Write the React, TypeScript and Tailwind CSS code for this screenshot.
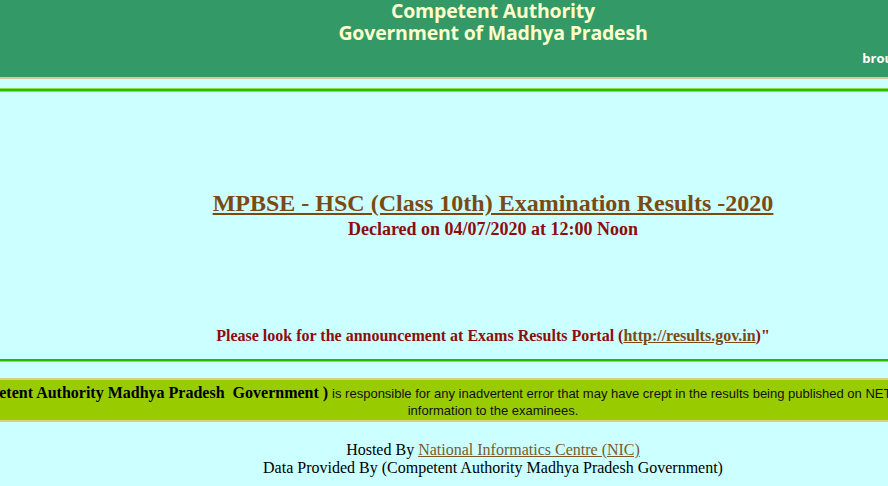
export default function App() {
  return (
    <div className="w-[888px] h-[486px] overflow-hidden bg-[#ccffff]">
      <div className="w-[986px]">
        <div className="h-[79px] bg-[#339966] border-b-2 border-[#d8c8a0] flex flex-col items-center" style={{ fontFamily: '"Open Sans", "DejaVu Sans", sans-serif' }}>
          <div className="text-[19.5px] font-bold leading-[22px] text-[#ffffcc] tracking-[-0.2px]">Competent Authority</div>
          <div className="text-[19.5px] font-bold leading-[22px] text-[#ffffcc] tracking-[-0.2px]">Government of Madhya Pradesh</div>
          <div className="self-stretch flex justify-end mt-[5px] pr-[8px]">
            <span className="text-[13px] font-bold text-white leading-[18px]">brought to you by</span>
          </div>
        </div>
        <div className="mt-[9px] h-[4px] bg-[#2fb800] border-y border-[#88e050]"></div>
        <div className="flex flex-col items-center" style={{ fontFamily: '"Liberation Serif", "Times New Roman", serif' }}>
          <a className="mt-[97px] text-[24px] font-bold leading-[28px] text-[#7b4a12] underline">MPBSE - HSC (Class 10th) Examination Results -2020</a>
          <div className="mt-[2px] text-[18px] font-bold leading-[20px] text-[#8b0d0d]">Declared on 04/07/2020 at 12:00 Noon</div>
          <div className="mt-[87px] text-[16px] font-bold leading-[20px] text-[#8b0d0d]">
            Please look for the announcement at Exams Results Portal (<a className="text-[#7b4a12] underline">http://results.gov.in</a>)"
          </div>
        </div>
        <div className="mt-[13px] h-[3px] bg-[#22bb00] border-b border-[#88e060]"></div>
        <div className="mt-[16px] bg-[#99cc00] border-y-2 border-[#d8d080] pt-[4px] pb-[1px] flex flex-col items-center">
          <div className="flex justify-center whitespace-nowrap leading-[18px] items-baseline">
            <span className="text-[16px] font-bold text-black" style={{ fontFamily: '"Liberation Serif", "Times New Roman", serif' }}>( Competent Authority Madhya Pradesh&nbsp; Government )</span>
            <span className="text-[13px] text-[#111] ml-[4px]" style={{ fontFamily: '"Liberation Sans", Arial, sans-serif' }}>is responsible for any inadvertent error that may have crept in the results being published on NET. These are for immediate</span>
          </div>
          <div className="text-[13px] leading-[16px] text-[#111]" style={{ fontFamily: '"Liberation Sans", Arial, sans-serif' }}>information to the examinees.</div>
        </div>
        <div className="mt-[19px] flex flex-col items-center text-[16px] leading-[18px] text-black" style={{ fontFamily: '"Liberation Serif", "Times New Roman", serif' }}>
          <div>Hosted By <a className="text-[#7b5a2a] underline">National Informatics Centre (NIC)</a></div>
          <div>Data Provided By (Competent Authority Madhya Pradesh Government)</div>
        </div>
      </div>
    </div>
  );
}
